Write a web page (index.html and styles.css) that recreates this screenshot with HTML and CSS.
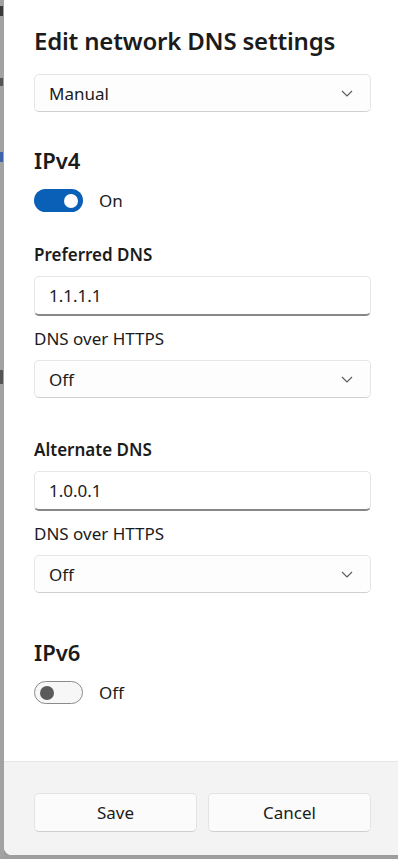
FILE: index.html
```html
<!DOCTYPE html>
<html lang="en">
<head>
  <meta charset="UTF-8">
  <title>Edit network DNS settings</title>
  <link rel="stylesheet" href="styles.css">
</head>
<body>
  <div class="screen">
    <div class="backdrop">
      <span class="frag f1"></span>
      <span class="frag f2"></span>
      <span class="frag f3"></span>
      <span class="frag f4"></span>
    </div>
    <div class="dialog">
      <div class="content">
        <h1 class="title">Edit network DNS settings</h1>
        <div class="select mode">
          <span>Manual</span>
          <svg class="chev" width="12" height="7" viewBox="0 0 12 7"><path d="M1 1l5 5 5-5" fill="none" stroke="#5c5c5c" stroke-width="1.2"/></svg>
        </div>

        <h2 class="section">IPv4</h2>
        <div class="switch-row">
          <div class="switch on"><span class="knob"></span></div>
          <span>On</span>
        </div>

        <div class="label strong">Preferred DNS</div>
        <div class="input">1.1.1.1</div>
        <div class="label">DNS over HTTPS</div>
        <div class="select">
          <span>Off</span>
          <svg class="chev" width="12" height="7" viewBox="0 0 12 7"><path d="M1 1l5 5 5-5" fill="none" stroke="#5c5c5c" stroke-width="1.2"/></svg>
        </div>

        <div class="label strong gap">Alternate DNS</div>
        <div class="input">1.0.0.1</div>
        <div class="label">DNS over HTTPS</div>
        <div class="select">
          <span>Off</span>
          <svg class="chev" width="12" height="7" viewBox="0 0 12 7"><path d="M1 1l5 5 5-5" fill="none" stroke="#5c5c5c" stroke-width="1.2"/></svg>
        </div>

        <h2 class="section v6">IPv6</h2>
        <div class="switch-row">
          <div class="switch off"><span class="knob"></span></div>
          <span>Off</span>
        </div>
      </div>

      <div class="footer">
        <button class="btn">Save</button>
        <button class="btn">Cancel</button>
      </div>
    </div>
  </div>
</body>
</html>
```

FILE: styles.css
```css
body {
  margin: 0;
  background: #9e9e9e;
  font-family: "Segoe UI", "Noto Sans", sans-serif;
  color: #1b1b1b;
  overflow: hidden;
}

.screen {
  display: flex;
  height: 859px;
}

.backdrop {
  position: relative;
  width: 4px;
  background: #a2a2a2;
}

.frag {
  position: absolute;
  left: 0;
  width: 3px;
  background: #3a3a3a;
}

.f1 { top: 6px; height: 10px; }
.f2 { top: 78px; height: 8px; background: #555; }
.f3 { top: 152px; height: 10px; background: #3f63a8; }
.f4 { top: 370px; height: 14px; background: #555; }

.dialog {
  flex: 1;
  height: 855px;
  background: #fff;
  border-radius: 0 0 0 8px;
  display: flex;
  flex-direction: column;
  overflow: hidden;
}

.content {
  flex: 1;
  padding: 0 27px 0 30px;
}

.title {
  margin: 24px 0 16px;
  font-size: 24px;
  font-weight: 600;
  line-height: 34px;
  letter-spacing: -0.2px;
}

.select,
.input {
  height: 38px;
  box-sizing: border-box;
  border: 1px solid #e6e6e6;
  border-radius: 5px;
  display: flex;
  align-items: center;
  padding: 0 13px 0 14px;
  font-size: 17px;
}

.select {
  justify-content: space-between;
  background: #fdfdfd;
  border-bottom-color: #d0d0d0;
}

.input {
  height: 40px;
  background: #fff;
  border-bottom: 2px solid #878787;
}

.chev {
  margin-right: 4px;
}

.section {
  margin: 33px 0 0;
  font-size: 22px;
  font-weight: 600;
  line-height: 30px;
}

.section.v6 {
  margin-top: 44px;
}

.switch-row {
  display: flex;
  align-items: center;
  gap: 16px;
  margin-top: 14px;
  font-size: 17px;
}

.switch {
  width: 49px;
  height: 23px;
  box-sizing: border-box;
  border-radius: 12px;
  display: flex;
  align-items: center;
  padding: 0 5px;
}

.switch .knob {
  width: 14px;
  height: 14px;
  border-radius: 50%;
}

.switch.on {
  background: #0a5fb6;
  justify-content: flex-end;
}

.switch.on .knob {
  background: #fff;
}

.switch.off {
  background: #f7f7f7;
  border: 1px solid #8b8b8b;
}

.switch.off .knob {
  background: #5b5b5b;
}

.label {
  margin: 11px 0 9px;
  font-size: 17px;
  line-height: 24px;
}

.label.strong {
  margin-top: 31px;
  font-weight: 600;
}

.label.gap {
  margin-top: 40px;
}

.footer {
  height: 94px;
  background: #f3f3f3;
  border-top: 1px solid #e5e5e5;
  display: flex;
  gap: 11px;
  padding: 31px 27px 0 30px;
  box-sizing: border-box;
}

.btn {
  flex: 1;
  height: 39px;
  background: #fbfbfb;
  border: 1px solid #e3e3e3;
  border-bottom-color: #cfcfcf;
  border-radius: 5px;
  font-family: inherit;
  font-size: 17px;
  color: #1b1b1b;
}
```
